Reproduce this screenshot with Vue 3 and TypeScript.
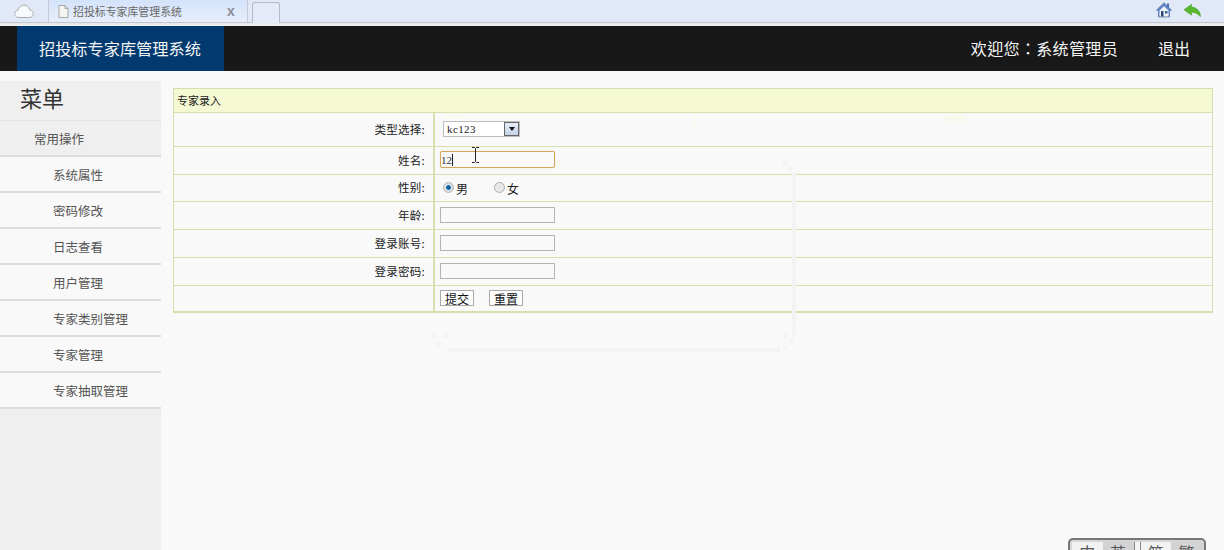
<script setup lang="ts">
const menu: string[] = ['系统属性', '密码修改', '日志查看', '用户管理', '专家类别管理', '专家管理', '专家抽取管理']
</script>

<template>
  <div class="page">
    <div class="browser">
      <div class="home-tab">
        <svg width="20" height="15" viewBox="0 0 20 15"><path d="M5 13.500C1.500 13.500.5 11 .7 9.500.9 7.500 2.500 6.300 4 6.200 4.800 3 7.300 1 10 1c3 0 5 2 5.600 4.800 2.300.4 3.700 2.300 3.700 4 0 2-1.500 3.700-3.800 3.700z" fill="#f9fafc" stroke="#a9acb2" stroke-width="1"/></svg>
      </div>
      <div class="tab">
        <svg class="doc" width="11" height="13" viewBox="0 0 11 13"><path d="M1 .5h6l3 3v9H1z M7 .5v3h3" fill="#f4f4f2" stroke="#a8a8a8"/></svg>
        <span class="tab-title">招投标专家库管理系统</span>
        <span class="tab-x">x</span>
      </div>
      <div class="new-tab"></div>
      <div class="browser-tools">
        <svg width="16" height="16" viewBox="0 0 16 16">
          <rect x="11" y="1.500" width="2" height="4" fill="#4b6fb0"/>
          <path d="M8 .8 15.500 8.200 13.500 8.200V15H2.500V8.200H.5z" fill="#5f86cc" stroke="#46608f" stroke-width=".6"/>
          <path d="M3.500 8.500 8 4.200l4.500 4.300V14.500h-9z" fill="#eef1f6"/>
          <rect x="5" y="9" width="2.500" height="5.500" fill="#2b4a78"/>
          <rect x="9" y="9" width="2.500" height="2.500" fill="#3f6196"/>
        </svg>
        <svg width="17" height="13" viewBox="0 0 17 13"><path d="M7.500.3 0 5.800l7.500 5.400V8.300c3.500 0 6 1.200 9 4.500C16.500 7.500 13 3.400 7.500 3z" fill="#5ab82f" stroke="#3f9a22" stroke-width=".5"/></svg>
      </div>
    </div>
    <div class="sep"></div>
    <header class="topbar">
      <div class="brand">招投标专家库管理系统</div>
      <div class="user">
        <span class="welcome">欢迎您：系统管理员</span>
        <span class="logout">退出</span>
      </div>
    </header>
    <div class="body">
      <aside class="side">
        <div class="side-title">菜单</div>
        <div class="side-group">常用操作</div>
        <div v-for="m in menu" :key="m" class="side-item">{{ m }}</div>
      </aside>
      <main class="main">
        <div class="card">
          <div class="card-title">专家录入</div>
          <div class="row r1">
            <label>类型选择:</label>
            <div class="cell">
              <div class="select">
                <span class="select-val">kc123</span>
                <span class="select-btn"><i></i></span>
              </div>
            </div>
          </div>
          <div class="row r2">
            <label>姓名:</label>
            <div class="cell"><div class="input focus">12<b class="caret"></b></div></div>
          </div>
          <div class="row r3">
            <label>性别:</label>
            <div class="cell radios">
              <span class="radio on"></span><span class="rt">男</span>
              <span class="radio off"></span><span class="rt">女</span>
            </div>
          </div>
          <div class="row r4">
            <label>年龄:</label>
            <div class="cell"><div class="input"></div></div>
          </div>
          <div class="row r4">
            <label>登录账号:</label>
            <div class="cell"><div class="input"></div></div>
          </div>
          <div class="row r4">
            <label>登录密码:</label>
            <div class="cell"><div class="input"></div></div>
          </div>
          <div class="row r5">
            <label></label>
            <div class="cell btns">
              <span class="btn">提交</span>
              <span class="btn b2">重置</span>
            </div>
          </div>
        </div>
      </main>
    </div>
    <svg class="ibeam" width="9" height="16" viewBox="0 0 9 16"><path d="M1 .5h2.500L4.500 1.500 5.500.5H8M4.500 1.500v13M1 15.500h2.500l1-1 1 1H8" fill="none" stroke="#222" stroke-width="1"/></svg>
    <svg class="ghost" width="380" height="210" viewBox="0 0 380 210">
      <g fill="#f3f3f3">
        <rect x="361" y="25" width="4" height="162"/>
        <rect x="17" y="200" width="332" height="4"/>
        <rect x="352" y="13" width="5" height="5"/><rect x="357" y="18" width="4" height="4"/>
        <rect x="0" y="186" width="4" height="4"/><rect x="13" y="186" width="4" height="4"/><rect x="5" y="194" width="5" height="5"/>
        <rect x="352" y="186" width="4" height="4"/><rect x="359" y="191" width="4" height="4"/><rect x="352" y="197" width="4" height="4"/>
      </g>
    </svg>
    <svg class="patches" width="540" height="16" viewBox="0 0 540 16">
      <g fill="#f8faef">
        <rect x="5" y="0" width="20" height="4"/>
        <rect x="253" y="0" width="3" height="12"/>
        <rect x="505" y="0" width="21" height="9"/>
      </g>
    </svg>
    <div class="lang">
      <span class="l on">中</span><span class="l">英</span><span class="gap"></span><span class="l on">简</span><span class="l">繁</span>
    </div>
  </div>
</template>

<style>
html, body { margin: 0; background: #f9f9f9; }
</style>

<style scoped>
.page {
  position: relative;
  width: 1224px;
  height: 550px;
  overflow: hidden;
  background: #f9f9f9;
  font-family: "Noto Sans CJK SC", "Liberation Sans", sans-serif;
  color: #333;
}
.browser {
  height: 22px;
  display: flex;
  align-items: flex-start;
  background: #e1e8f7;
}
.home-tab {
  display: flex;
  width: 48px;
  height: 22px;
  box-sizing: border-box;
  padding: 4px 0 0 14px;
}
.tab {
  width: 200px;
  height: 22px;
  box-sizing: border-box;
  display: flex;
  align-items: center;
  padding-left: 9px;
  background: linear-gradient(#d3e3fb, #e8eefa);
  border-left: 1px solid #c5cad4;
  border-right: 1px solid #c5cad4;
}
.doc { margin-right: 4px; }
.tab-title { font-size: 10.900px; color: #6a6a6a; width: 154px; white-space: nowrap; }
.tab-x { font-size: 14px; font-weight: 700; color: #8a8e96; font-family: "Liberation Sans", sans-serif; line-height: 18px; }
.new-tab {
  width: 26px;
  height: 20px;
  margin: 2px 0 0 4px;
  background: #e4eaf8;
  border: 1px solid #b5bac4;
  border-bottom: 0;
  border-radius: 3px 3px 0 0;
}
.browser-tools {
  margin-left: auto;
  margin-right: 23px;
  display: flex;
  gap: 12px;
  align-items: center;
  height: 20px;
}
.sep {
  height: 4px;
  background: linear-gradient(#c3c8d0 0, #c3c8d0 25%, #e4e6ea 25%, #f2f3f5 100%);
}
.topbar {
  height: 45px;
  display: flex;
  justify-content: space-between;
  align-items: center;
  background: #181818;
  color: #f4f4f4;
}
.brand {
  margin-left: 17px;
  width: 207px;
  height: 45px;
  line-height: 44px;
  box-sizing: border-box;
  padding-left: 22px;
  background: #023a70;
  font-size: 16.200px;
  white-space: nowrap;
}
.user {
  display: flex;
  gap: 40px;
  margin: -2px 34px 0 0;
  font-size: 16px;
}
.welcome {
  font-family: "Noto Sans CJK TC", sans-serif;
  letter-spacing: .35px;
}
.body {
  display: flex;
  padding-top: 10px;
  height: 479px;
  box-sizing: border-box;
}
.side {
  width: 161px;
  background: #efefef;
}
.side-title {
  height: 40px;
  line-height: 33px;
  padding-left: 20px;
  font-size: 22px;
  color: #333;
  border-bottom: 1px solid #e2e2e2;
  box-sizing: border-box;
}
.side-group {
  height: 35px;
  line-height: 33px;
  padding-left: 34px;
  font-size: 12.500px;
  color: #555;
  border-bottom: 2px solid #dedede;
  box-sizing: border-box;
  margin-top: 1px;
}
.side-item {
  height: 36px;
  line-height: 36px;
  padding-left: 53px;
  font-size: 12.500px;
  color: #555;
  background: #f9f9f9;
  border-bottom: 2px solid #dedede;
  box-sizing: border-box;
}
.main {
  flex: 1;
  padding: 7px 11px 0 12px;
}
.card {
  border: 1px solid #d4e0ae;
  border-width: 1px 1px 0 1px;
  font-size: 11.500px;
  color: #222;
}
.card-title {
  height: 24px;
  line-height: 23px;
  padding-left: 3px;
  font-size: 11px;
  background: #f4f9d4;
  border-bottom: 1px solid #d4e0ae;
  box-sizing: border-box;
}
.row {
  display: flex;
  border-bottom: 1px solid #d4e0ae;
  box-sizing: border-box;
}
.r1 { height: 34px; }
.r2 { height: 28px; }
.r3 { height: 27px; }
.r4 { height: 28px; }
.r5 { height: 27px; border-bottom-width: 2px; }
.row label {
  width: 261px;
  box-sizing: border-box;
  padding-right: 8px;
  text-align: right;
  border-right: 2px solid #d4e0ae;
  align-self: stretch;
  line-height: 26px;
  letter-spacing: .25px;
}
.r1 label { line-height: 32px; }
.r3 label { line-height: 24px; }
.cell {
  display: flex;
  align-items: center;
  padding-left: 5px;
}
.select {
  display: flex;
  align-items: center;
  width: 77px;
  height: 16px;
  box-sizing: border-box;
  margin: -1px 0 0 3px;
  background: #fff;
  border: 1px solid #bcbcbc;
  font-family: "Liberation Serif", serif;
  font-size: 11px;
}
.select-val { flex: 1; padding-left: 3px; letter-spacing: .4px; }
.select-btn {
  width: 15px;
  height: 14px;
  box-sizing: border-box;
  border: 1px solid #666;
  background: linear-gradient(#e6eefa, #c5d2e8);
  display: flex;
  align-items: center;
  justify-content: center;
}
.select-btn i {
  width: 0;
  height: 0;
  border: 3px solid transparent;
  border-top: 4px solid #111;
  border-bottom: 0;
}
.input {
  width: 115px;
  height: 16px;
  line-height: 16px;
  box-sizing: border-box;
  margin-top: -2px;
  background: #f9f9f9;
  border: 1px solid #b4b4b4;
  font-family: "Liberation Serif", serif;
  font-size: 11px;
  color: #333;
}
.input.focus {
  border-color: #d0a85a;
  border-width: 1.500px;
  border-radius: 2px;
  box-shadow: 0 0 1px #e8c888;
  height: 17px;
  margin-top: -3px;
}
.caret {
  display: inline-block;
  width: 1px;
  height: 12px;
  background: #222;
  vertical-align: -2px;
}
.radios { font-size: 12px; padding-left: 8px; }
.radio {
  width: 11px;
  height: 11px;
  box-sizing: border-box;
  border-radius: 50%;
  margin-top: -2px;
}
.radio.on {
  background: radial-gradient(circle, #0e5f9e 0 30%, #dfe6ee 45%, #c7c7c7 100%);
  border: 1px solid #b8b8b8;
}
.radio.off {
  background: #e8e8e8;
  border: 1px solid #b0b0b0;
  margin-left: 26px;
}
.rt { margin-left: 2px; margin-top: 1px; width: 12px; }
.btn {
  display: inline-block;
  height: 16px;
  line-height: 15px;
  width: 34px;
  box-sizing: border-box;
  margin-top: -2px;
  text-align: center;
  background: #fdfdfd;
  border: 1px solid #aaa;
  font-size: 12px;
  color: #111;
}
.b2 { margin-left: 15px; }
.ibeam { position: absolute; left: 471px; top: 147px; }
.ghost { position: absolute; left: 431px; top: 148px; pointer-events: none; }
.patches { position: absolute; left: 440px; top: 114px; pointer-events: none; }
.lang {
  position: absolute;
  left: 1068px;
  top: 538px;
  width: 138px;
  height: 30px;
  box-sizing: border-box;
  display: flex;
  padding: 2px;
  background: #d6d6d6;
  border: 2px solid #777;
  border-radius: 5px;
  font-size: 16px;
  color: #555;
}
.l { flex: 1; text-align: center; line-height: 20px; background: #d3d3d3; }
.l.on { background: #f2f2f2; }
.gap { width: 5px; background: #f4f4f4; border-left: 1px solid #888; border-right: 1px solid #888; }
</style>
